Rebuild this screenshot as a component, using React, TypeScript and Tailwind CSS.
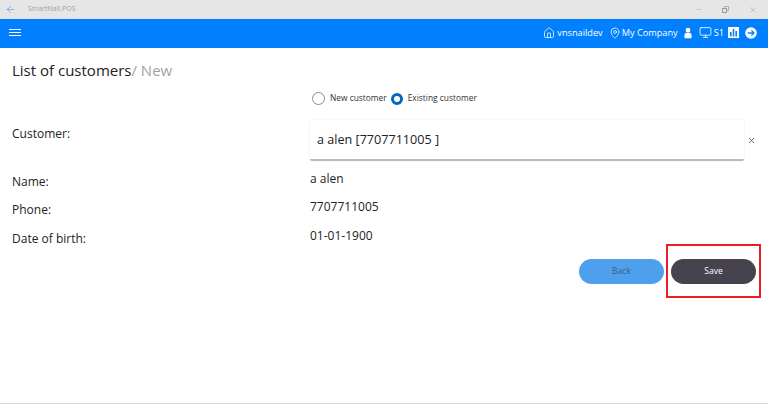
import { House, MapPin, Monitor, Minus, X, ArrowLeft } from "lucide-react";

function Row({ label, value, className }: { label: string; value: string; className: string }) {
    return (
        <div className={"flex h-[22px] " + className}>
            <div className="w-[298px] pt-[3px] text-[12px] leading-[18px] text-[#222]">{label}</div>
            <div className="text-[12px] leading-[18px] text-[#222]">{value}</div>
        </div>
    );
}

export default function App() {
    return (
        <div className="relative h-[404px] w-[768px] overflow-hidden bg-white font-['Open_Sans',sans-serif]">
            {/* window title bar */}
            <div className="flex h-[19px] items-center bg-[#e6e6e6]">
                <ArrowLeft size={11} className="ml-[5px] text-[#5a9ee8]" strokeWidth={1.5} />
                <span className="ml-[12px] text-[7px] text-[#a0a0a0]">SmartNail.POS</span>
                <div className="ml-auto flex items-center gap-[19px] pr-[10px] text-[#9a9a9a]">
                    <Minus size={9} strokeWidth={1} />
                    <div className="relative h-[7px] w-[7px]">
                        <div className="absolute right-0 top-0 h-[5px] w-[5px] border border-[#b0b0b0]" />
                        <div className="absolute bottom-0 left-0 h-[5px] w-[5px] border border-[#9a9a9a] bg-[#e6e6e6]" />
                    </div>
                    <X size={10} strokeWidth={1} />
                </div>
            </div>

            {/* app bar */}
            <div className="flex h-[29px] items-center bg-[#0080ff] text-white">
                <div className="mb-[3px] ml-[9px] flex w-[12px] flex-col gap-[2px]">
                    <div className="h-px bg-white" />
                    <div className="h-px bg-white" />
                    <div className="h-px bg-white" />
                </div>
                <div className="mb-[1px] ml-auto flex items-center pr-[11px] text-[9.2px]">
                    <House size={12} strokeWidth={1.5} />
                    <span className="ml-[2px]">vnsnaildev</span>
                    <MapPin size={12} strokeWidth={1.5} className="ml-[6px]" />
                    <span className="ml-[1px]">My Company</span>
                    <svg width="8" height="12" viewBox="0 0 9 12" className="ml-[6px]" fill="white">
                        <circle cx="4.5" cy="2.8" r="2.6" />
                        <path d="M0.5 12 V8.5 C0.5 6.5 2 5.8 4.5 5.8 C7 5.8 8.5 6.5 8.5 8.5 V12 Z" />
                    </svg>
                    <Monitor size={13} strokeWidth={1.5} className="ml-[7px]" />
                    <span className="ml-[2px]">S1</span>
                    <svg width="11" height="11" viewBox="0 0 11 11" className="ml-[4px]">
                        <rect width="11" height="11" fill="white" />
                        <rect x="2" y="5" width="1.6" height="4.5" fill="#0080ff" />
                        <rect x="4.7" y="2" width="1.6" height="7.5" fill="#0080ff" />
                        <rect x="7.4" y="4" width="1.6" height="5.5" fill="#0080ff" />
                    </svg>
                    <svg width="12" height="12" viewBox="0 0 12 12" className="ml-[6px]">
                        <circle cx="6" cy="6" r="5.8" fill="white" />
                        <path d="M2.8 6 H9 M6.4 3.4 L9 6 L6.4 8.6" stroke="#0080ff" strokeWidth="1.3" fill="none" />
                    </svg>
                </div>
            </div>

            {/* page */}
            <div className="px-[12px] pt-[11px]">
                <h1 className="text-[15px] leading-[22px] text-[#222]">
                    List of customers<span className="text-[#a3a3a3]">/ New</span>
                </h1>

                <div className="ml-[300px] mt-[11px] flex items-center text-[8.4px] text-[#333]">
                    <div className="h-[13px] w-[13px] rounded-full border border-[#8a8a8a] bg-white" />
                    <span className="ml-[5px]">New customer</span>
                    <div className="ml-[4px] h-[12px] w-[12px] rounded-full border-[3px] border-[#0067c0] bg-white" />
                    <span className="ml-[5px]">Existing customer</span>
                </div>

                <div className="mt-[15px] flex">
                    <div className="w-[298px] pt-[5px] text-[12px] leading-[18px] text-[#222]">Customer:</div>
                    <div className="flex h-[41px] w-[434px] items-center rounded-[2px] border-b-2 border-b-[#bbb] bg-white pl-[7px] pt-[2px] text-[12.6px] text-[#222] shadow-[0_0_2px_rgba(0,0,0,0.12)]">
                        a alen [7707711005 ]
                    </div>
                    <X size={9} strokeWidth={2} className="ml-[3px] mt-[16px] text-[#444]" />
                </div>

                <Row label="Name:" value="a alen" className="mt-[9px]" />
                <Row label="Phone:" value="7707711005" className="mt-[6px]" />
                <Row label="Date of birth:" value="01-01-1900" className="mt-[7px]" />

                <div className="mt-[10px] flex justify-end gap-[7px]">
                    <button className="h-[25px] w-[85px] rounded-full bg-[#4fa0ec] text-[8.5px] text-[#3d5f85]">Back</button>
                    <button className="h-[25px] w-[85px] rounded-full bg-[#46424e] text-[8.5px] text-white">Save</button>
                </div>
            </div>

            {/* annotation */}
            <div className="absolute left-[666px] top-[244px] h-[54px] w-[95px] border-2 border-[#ee1c25]" />

            <div className="absolute bottom-0 left-0 h-px w-full bg-[#d8d8d8]" />
        </div>
    );
}
